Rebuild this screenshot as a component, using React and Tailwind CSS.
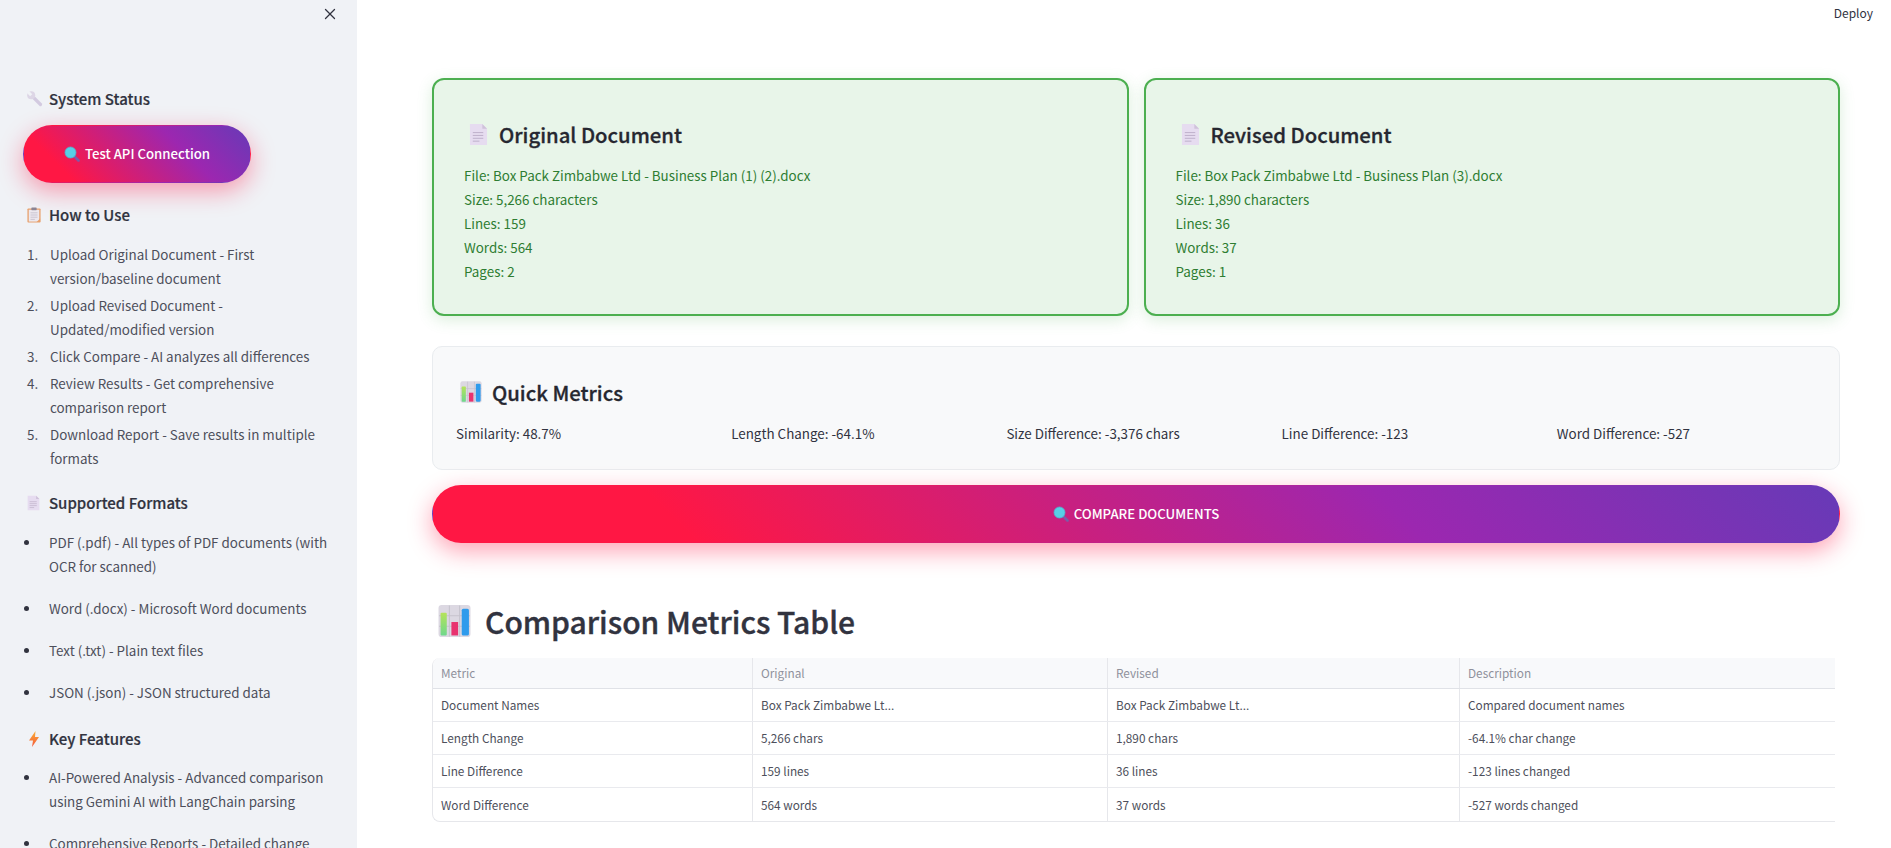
import React from 'react';
import { X } from 'lucide-react';

const ChartIcon = ({ className }) => (
  <svg viewBox="0 0 32 32" className={className}>
    <defs>
      <linearGradient id="greenBar" x1="0" y1="0" x2="0" y2="1">
        <stop offset="0" stopColor="#b5e35a" />
        <stop offset="1" stopColor="#6fd88c" />
      </linearGradient>
    </defs>
    <rect x="0.5" y="0.5" width="31" height="31" rx="3" fill="#dcd8e2" />
    <path d="M11 1v30M21 1v30M1 11h30M1 21h30" stroke="#c6c2cd" strokeWidth="1" />
    <rect x="2.5" y="8" width="6" height="22" rx="1" fill="url(#greenBar)" />
    <rect x="13" y="17" width="6.5" height="13" fill="#e8326f" />
    <rect x="23" y="4" width="7" height="26" rx="1.5" fill="#2f9bec" />
  </svg>
);

const DocIcon = ({ className }) => (
  <svg viewBox="0 0 20 24" className={className}>
    <path d="M1 1h13l5 5v17H1z" fill="#e6dcf0" />
    <path d="M14 1l5 5h-5z" fill="#cfc2da" />
    <path d="M4 10h11M4 13h11M4 16h11M4 19h7" stroke="#bcaec8" strokeWidth="1" />
  </svg>
);

const ClipboardIcon = ({ className }) => (
  <svg viewBox="0 0 16 18" className={className}>
    <rect x="0.5" y="1.5" width="15" height="16" rx="1" fill="#e8a06c" />
    <rect x="2" y="3" width="12" height="13.5" fill="#ece8ee" />
    <rect x="5" y="0.5" width="6" height="3" rx="0.5" fill="#8b8494" />
    <path d="M4 6.500h8M4 9h8M4 11.500h8M4 14h5" stroke="#bdb6c6" strokeWidth="0.8" />
    <path d="M15 13v4h-4z" fill="#e8a06c" />
  </svg>
);

const WrenchIcon = ({ className }) => (
  <svg viewBox="0 0 16 16" className={className}>
    <path d="M5 5l8.500 8.500" stroke="#d3cae0" strokeWidth="3.200" strokeLinecap="round" />
    <circle cx="4.200" cy="4.200" r="4" fill="#ddd6e6" />
    <path d="M-1 -1L4.200 4.200" stroke="#f0f2f6" strokeWidth="3" />
  </svg>
);

const SearchIcon = ({ className }) => (
  <svg viewBox="0 0 16 16" className={className}>
    <path d="M9.500 9.500l5 5" stroke="#7e5aa6" strokeWidth="2.600" strokeLinecap="round" />
    <circle cx="6.500" cy="6.500" r="5.500" fill="#58cfe6" stroke="#4fb3cf" strokeWidth="0.800" />
  </svg>
);

const BoltIcon = ({ className }) => (
  <svg viewBox="0 0 10 16" className={className}>
    <defs>
      <linearGradient id="bolt" x1="0" y1="0" x2="0" y2="1">
        <stop offset="0" stopColor="#fbb034" />
        <stop offset="1" stopColor="#f4573c" />
      </linearGradient>
    </defs>
    <path d="M6.500 0L0 9.500h4L3 16l7-10H6z" fill="url(#bolt)" />
  </svg>
);

const SideHeading = ({ icon, children, className = '' }) => (
  <div className={`flex items-center h-6 text-[15px] font-medium [-webkit-text-stroke:0.2px] text-[#31333f] ${className}`}>
    <span className="w-[22px] flex items-center shrink-0">{icon}</span>
    <span>{children}</span>
  </div>
);

const steps = [
  ['Upload Original Document - First', 'version/baseline document'],
  ['Upload Revised Document -', 'Updated/modified version'],
  ['Click Compare - AI analyzes all differences'],
  ['Review Results - Get comprehensive', 'comparison report'],
  ['Download Report - Save results in multiple', 'formats'],
];

const formats = [
  ['PDF (.pdf) - All types of PDF documents (with', 'OCR for scanned)'],
  ['Word (.docx) - Microsoft Word documents'],
  ['Text (.txt) - Plain text files'],
  ['JSON (.json) - JSON structured data'],
];

const features = [
  ['AI-Powered Analysis - Advanced comparison', 'using Gemini AI with LangChain parsing'],
  ['Comprehensive Reports - Detailed change'],
];

const Lines = ({ lines }) => lines.map((line) => <div key={line}>{line}</div>);

const BulletList = ({ items }) => (
  <ul className="text-[13.4px] leading-6 text-[#4d4f5b]">
    {items.map((lines) => (
      <li key={lines[0]} className="flex mb-[18px]">
        <span className="w-[25px] shrink-0 flex items-center h-6">
          <span className="w-[5px] h-[5px] rounded-full bg-[#31333f]" />
        </span>
        <div className="whitespace-nowrap"><Lines lines={lines} /></div>
      </li>
    ))}
  </ul>
);

const Sidebar = () => (
  <aside className="w-[357px] h-full shrink-0 bg-[#f0f2f6] overflow-hidden pl-[24px] pt-[3px] relative">
    <X className="absolute left-[321px] top-[5px] w-[18px] h-[18px] text-[#31333f]" strokeWidth={1.75} />
    <SideHeading className="mt-[84px] ml-[3px]" icon={<WrenchIcon className="w-4 h-4" />}>System Status</SideHeading>
    <button className="-ml-px mt-[14px] w-[228px] h-[58px] rounded-[29px] border border-transparent bg-[linear-gradient(45deg,#ff1744_18%,#9c27b0_68%,#673ab7)] shadow-[0_8px_25px_rgba(255,23,68,0.4)] flex items-center justify-center text-white text-[13.2px] font-medium">
      <SearchIcon className="w-4 h-4 mr-[5px]" />
      Test API Connection
    </button>
    <SideHeading className="mt-[20px] ml-[3px]" icon={<ClipboardIcon className="w-[14px] h-4" />}>How to Use</SideHeading>
    <ol className="mt-[15px] text-[13.4px] leading-6 text-[#4d4f5b]">
      {steps.map((lines, i) => (
        <li key={lines[0]} className="flex mb-[3px]">
          <span className="w-[26px] shrink-0 pl-[3px]">{i + 1}.</span>
          <div className="whitespace-nowrap"><Lines lines={lines} /></div>
        </li>
      ))}
    </ol>
    <SideHeading className="mt-[21px] ml-[3px]" icon={<DocIcon className="w-[13px] h-4" />}>Supported Formats</SideHeading>
    <div className="mt-[15px]"><BulletList items={formats} /></div>
    <SideHeading className="mt-[23px] ml-[3px]" icon={<BoltIcon className="w-[10px] h-4 ml-[2px]" />}>Key Features</SideHeading>
    <div className="mt-[14px]"><BulletList items={features} /></div>
  </aside>
);

const DocCard = ({ title, info }) => (
  <div className="h-[238px] rounded-[12px] border-2 border-[#4caf50] bg-[#e8f5e9] shadow-[0_4px_15px_rgba(76,175,80,0.2)] pl-[30px] pt-[38px]">
    <div className="flex items-center h-8 text-[20.3px] font-medium [-webkit-text-stroke:0.3px] text-[#262730]">
      <DocIcon className="w-[19px] h-[23px] ml-[5px] mr-[11px]" />
      {title}
    </div>
    <div className="mt-[13px] text-[13.4px] leading-6 text-[#2e7d32]">
      {info.map((line) => <div key={line}>{line}</div>)}
    </div>
  </div>
);

const quickMetrics = [
  'Similarity: 48.7%',
  'Length Change: -64.1%',
  'Size Difference: -3,376 chars',
  'Line Difference: -123',
  'Word Difference: -527',
];

const tableRows = [
  ['Document Names', 'Box Pack Zimbabwe Lt...', 'Box Pack Zimbabwe Lt...', 'Compared document names'],
  ['Length Change', '5,266 chars', '1,890 chars', '-64.1% char change'],
  ['Line Difference', '159 lines', '36 lines', '-123 lines changed'],
  ['Word Difference', '564 words', '37 words', '-527 words changed'],
];

const MetricsTable = () => (
  <div className="mt-[9px] mr-[5px] rounded-l-[8px] border-l border-b border-[#e6e7eb] overflow-hidden text-[11.8px]">
    <div className="grid grid-cols-[320px_355px_352px_1fr] h-[31px] bg-[#f8f9fb] border-b border-[#e0e2e7] text-[#8f919b]">
      {['Metric', 'Original', 'Revised', 'Description'].map((head, i) => (
        <div key={head} className={`flex items-center pl-2 ${i < 3 ? 'border-r border-[#e6e7eb]' : ''}`}>{head}</div>
      ))}
    </div>
    {tableRows.map((row, r) => (
      <div key={row[0]} className={`grid grid-cols-[320px_355px_352px_1fr] text-[#4d4f5b] ${r < 3 ? 'h-[33px] border-b border-[#e9eaee]' : 'h-[33px]'}`}>
        {row.map((cell, i) => (
          <div key={cell + i} className={`flex items-center pl-2 ${i < 3 ? 'border-r border-[#e6e7eb]' : ''}`}>{cell}</div>
        ))}
      </div>
    ))}
  </div>
);

export default function App() {
  return (
    <div className="flex w-[1891px] h-[848px] overflow-hidden bg-white font-['Noto_Sans_CJK_SC','Liberation_Sans',sans-serif]">
      <Sidebar />
      <main className="flex-1 min-w-0 pl-[75px] pr-[51px]">
        <div className="h-[78px] flex justify-end -mr-[33px] pt-[3px] text-[12px] leading-5 text-[#31333f]">Deploy</div>
        <div className="grid grid-cols-2 gap-[15px]">
          <DocCard
            title="Original Document"
            info={['File: Box Pack Zimbabwe Ltd - Business Plan (1) (2).docx', 'Size: 5,266 characters', 'Lines: 159', 'Words: 564', 'Pages: 2']}
          />
          <DocCard
            title="Revised Document"
            info={['File: Box Pack Zimbabwe Ltd - Business Plan (3).docx', 'Size: 1,890 characters', 'Lines: 36', 'Words: 37', 'Pages: 1']}
          />
        </div>
        <section className="mt-[30px] h-[124px] rounded-[10px] border border-[#e9ecef] bg-[#f8f9fa] px-[23px] pt-[29px]">
          <div className="flex items-center h-8 text-[20.3px] font-medium [-webkit-text-stroke:0.3px] text-[#262730]">
            <ChartIcon className="w-[22px] h-[22px] ml-[4px] mr-[10px]" />
            Quick Metrics
          </div>
          <div className="mt-[13px] grid grid-cols-5 gap-4 text-[13.4px] leading-6 text-[#31333f]">
            {quickMetrics.map((metric) => <div key={metric}>{metric}</div>)}
          </div>
        </section>
        <button className="mt-[15px] w-full h-[58px] rounded-[29px] border border-transparent bg-[linear-gradient(45deg,#ff1744_18%,#9c27b0_68%,#673ab7)] shadow-[0_8px_25px_rgba(255,23,68,0.4)] flex items-center justify-center text-white text-[13.2px] font-medium">
          <SearchIcon className="w-4 h-4 mr-[5px]" />
          COMPARE DOCUMENTS
        </button>
        <h2 className="mt-[50px] flex items-center h-[56px] text-[30px] font-medium [-webkit-text-stroke:0.4px] text-[#31333f]">
          <ChartIcon className="w-[33px] h-[34px] ml-[6px] mr-[14px]" />
          Comparison Metrics Table
        </h2>
        <MetricsTable />
      </main>
    </div>
  );
}
